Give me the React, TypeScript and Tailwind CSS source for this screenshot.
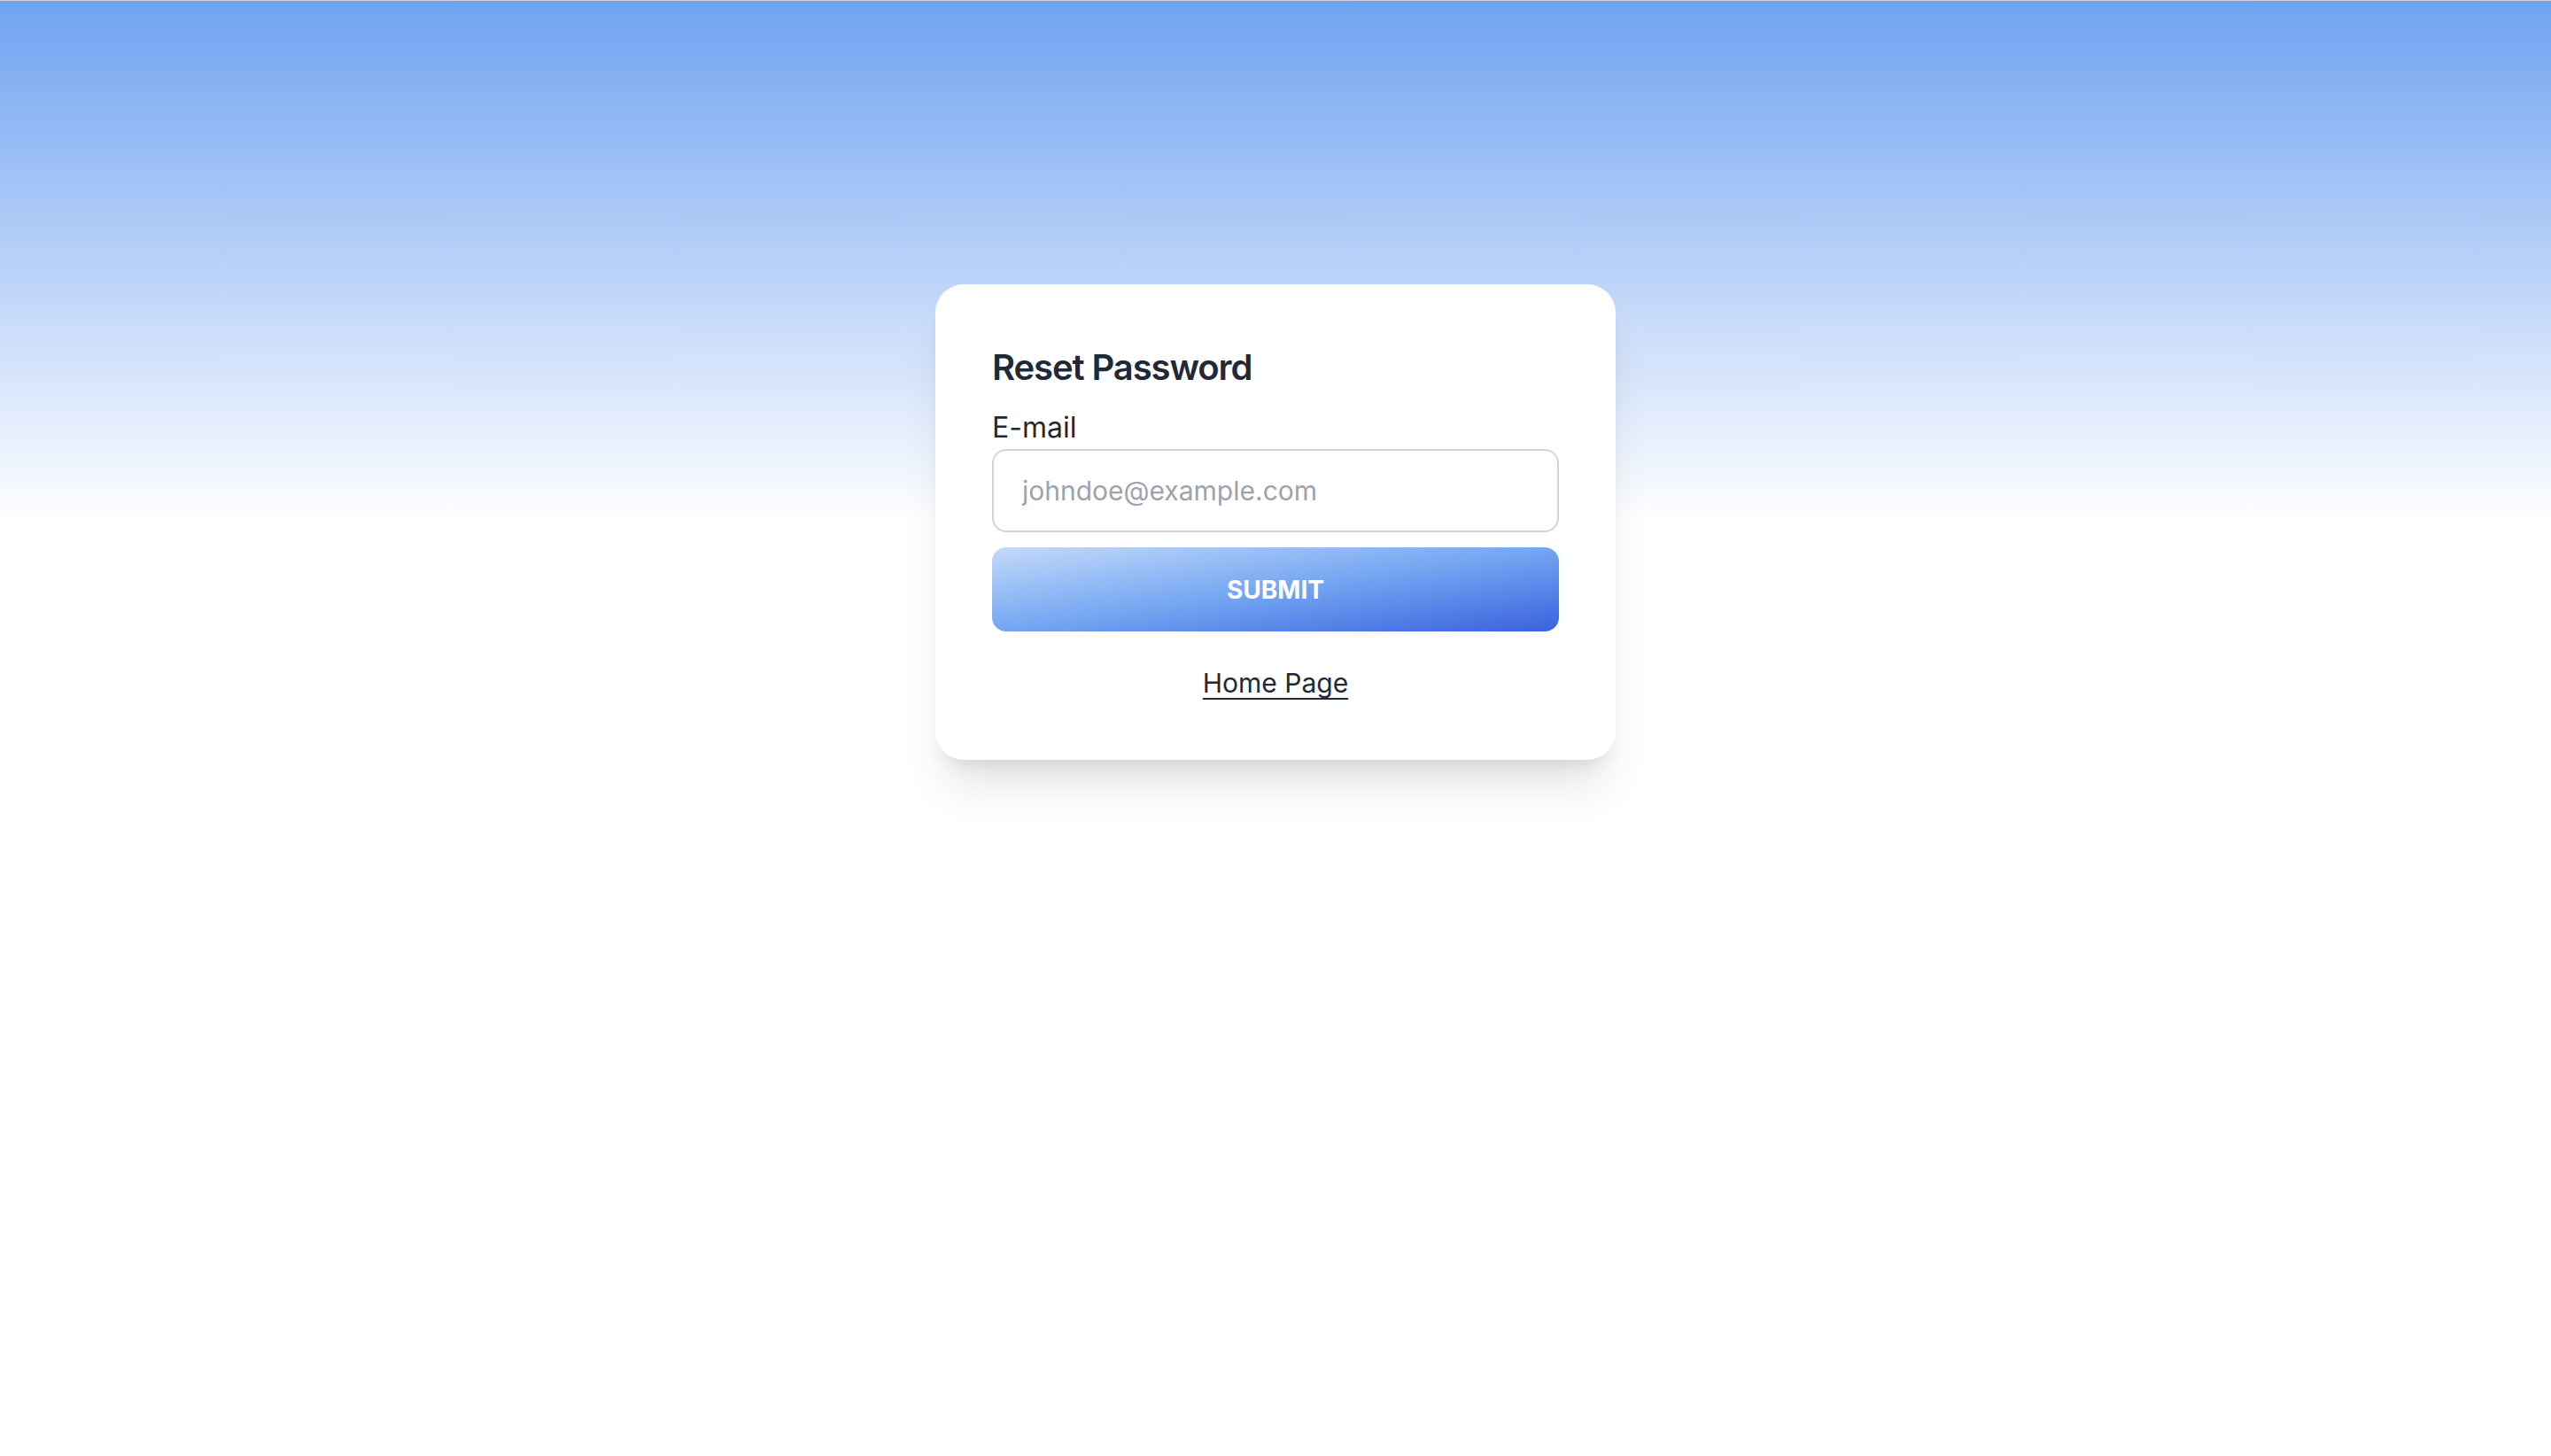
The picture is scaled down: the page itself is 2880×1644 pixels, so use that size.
import React from "react";

// Reset password card over a soft blue top gradient
export default function App() {
  return (
    <div
      className="min-h-screen w-full border-t border-[#d4d4d4] bg-[linear-gradient(to_bottom,#6fa3f1_0px,#b9d2f8_300px,#ffffff_590px)] bg-white"
      style={{ fontFamily: "Inter, 'Liberation Sans', sans-serif" }}
    >
      <div className="flex justify-center pt-[320px]">
        <div className="w-[768px] rounded-[32px] bg-white px-[64px] pt-[66px] pb-[62px] shadow-[0_40px_50px_-10px_rgba(0,0,0,0.1),0_16px_20px_-12px_rgba(0,0,0,0.1)]">
          <h2 className="text-[40px] leading-[56px] font-semibold tracking-[-1.1px] text-[#1f2937]">
            Reset Password
          </h2>

          <form className="mt-[16px] flex flex-col" onSubmit={(e) => e.preventDefault()}>
            <label htmlFor="email" className="text-[32px] leading-[48px] text-[#1f2937]">
              E-mail
            </label>
            <input
              id="email"
              type="email"
              placeholder="johndoe@example.com"
              className="h-[94px] w-full rounded-[16px] border-2 border-[#d1d5db] bg-white px-[32px] text-[30px] text-[#1f2937] outline-none placeholder:text-[#9ca3af]"
            />
            <button
              type="submit"
              className="mt-[17px] h-[95px] w-full rounded-[16px] bg-[linear-gradient(to_bottom_right,#c4dafa,#74a6f2_50%,#3a62de)] text-[28px] font-bold uppercase text-white"
            >
              Submit
            </button>
          </form>

          <div className="mt-[33px] text-center text-[30px] leading-[50px]">
            <a href="#" className="text-[#1f2937] underline underline-offset-[6px] decoration-2">
              Home Page
            </a>
          </div>
        </div>
      </div>
    </div>
  );
}
